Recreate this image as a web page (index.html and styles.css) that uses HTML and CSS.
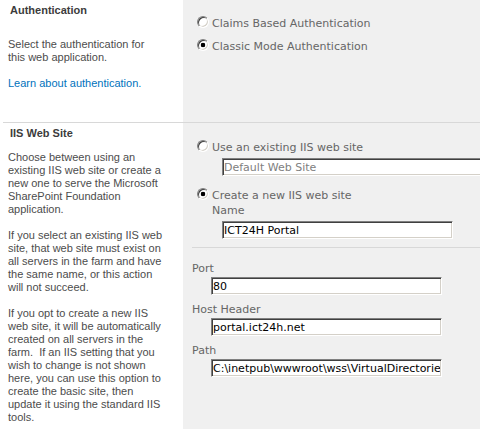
FILE: index.html
```html
<!DOCTYPE html>
<html lang="en">
<head>
  <meta charset="UTF-8">
  <meta name="viewport" content="width=device-width, initial-scale=1.0">
  <title>Create New Web Application</title>
  <link rel="stylesheet" href="styles.css">
</head>
<body>
  <div class="form">
    <div class="section">
      <div class="desc">
        <h3 class="section-title">Authentication</h3>
        <div class="desc-text desc-text-auth">
          <p>Select the authentication for<br>this web application.</p>
          <p><a href="#">Learn about authentication.</a></p>
        </div>
      </div>
      <div class="controls controls-auth">
        <label class="option"><input type="radio" class="radio" name="auth"> Claims Based Authentication</label>
        <label class="option"><input type="radio" class="radio" name="auth" checked> Classic Mode Authentication</label>
      </div>
    </div>

    <div class="section">
      <div class="desc">
        <h3 class="section-title">IIS Web Site</h3>
        <div class="desc-text">
          <p>Choose between using an existing IIS web site or create a new one to serve the Microsoft SharePoint Foundation application.</p>
          <p>If you select an existing IIS web site, that web site must exist on all servers in the farm and have the same name, or this action will not succeed.</p>
          <p>If you opt to create a new IIS web site, it will be automatically created on all servers in the farm.&nbsp; If an IIS setting that you wish to change is not shown here, you can use this option to create the basic site, then update it using the standard IIS tools.</p>
        </div>
      </div>
      <div class="controls controls-iis">
        <label class="option"><input type="radio" class="radio" name="site"> Use an existing IIS web site</label>
        <div class="sub">
          <input type="text" class="text-input text-input-wide" value="Default Web Site" disabled>
        </div>
        <label class="option option-create"><input type="radio" class="radio" name="site" checked> Create a new IIS web site</label>
        <div class="sub-label">Name</div>
        <div class="sub">
          <input type="text" class="text-input" value="ICT24H Portal">
        </div>
        <div class="divider"></div>
        <div class="field">
          <div class="field-label">Port</div>
          <input type="text" class="text-input" value="80">
        </div>
        <div class="field">
          <div class="field-label">Host Header</div>
          <input type="text" class="text-input" value="portal.ict24h.net">
        </div>
        <div class="field">
          <div class="field-label">Path</div>
          <input type="text" class="text-input" value="C:\inetpub\wwwroot\wss\VirtualDirectories\portal.ict24h.net80">
        </div>
      </div>
    </div>
  </div>
</body>
</html>
```

FILE: styles.css
```css
body {
  margin: 0;
  background: #fff;
  overflow: hidden;
}
.form {
  padding-left: 3px;
}
.section {
  display: flex;
}
.section + .section {
  border-top: 1px solid #d8d8d8;
}
.desc {
  width: 180px;
  flex-shrink: 0;
  box-sizing: border-box;
  padding: 4px 17px 32px 5px;
  font-family: "Liberation Sans", Arial, sans-serif;
  font-size: 11px;
  line-height: 13px;
  color: #4c4c4c;
}
.section-title {
  margin: 0 0 0 2px;
  font-size: 11px;
  line-height: 13px;
  font-weight: bold;
  color: #3c3c3c;
}
.desc-text {
  margin-top: 11px;
}
.desc-text-auth {
  margin-top: 21px;
}
.desc-text p {
  margin: 0 0 13px;
}
.desc-text p:last-child {
  margin-bottom: 0;
}
.desc-text a {
  color: #0072bc;
  text-decoration: none;
}
.controls {
  flex: 1;
  overflow: hidden;
  background: #f0f0f0;
  padding-left: 9px;
  font-family: "DejaVu Sans", Verdana, sans-serif;
  font-size: 11px;
  line-height: 15px;
  color: #666;
}
.controls-auth {
  padding-top: 16px;
}
.controls-auth .option + .option {
  margin-top: 8px;
}
.controls-iis {
  padding-top: 17px;
}
.option {
  display: flex;
  align-items: flex-start;
  margin-left: 5px;
  white-space: nowrap;
}
.radio {
  appearance: none;
  -webkit-appearance: none;
  width: 12px;
  height: 12px;
  margin: 0 3px 0 0;
  box-sizing: border-box;
  border-radius: 50%;
  border: 1px solid;
  border-color: #808080 #fff #fff #808080;
  box-shadow: inset 1px 1px 0 #404040, inset -1px -1px 0 #d4d0c8;
  background: #fff;
}
.radio:checked {
  background: radial-gradient(circle, #000 0, #000 2px, #fff 2.6px);
}
.sub {
  margin-left: 30px;
}
.sub .text-input-wide {
  margin-top: 5px;
  width: 270px;
}
.option-create {
  margin-top: 12px;
}
.sub-label {
  margin-left: 20px;
}
.sub .text-input {
  margin-top: 3px;
}
.divider {
  height: 1px;
  margin-top: 8px;
  background: #d8d8d8;
}
.field {
  margin-top: 7px;
}
.divider + .field {
  margin-top: 13px;
}
.field-label {
  line-height: 15px;
}
.field .text-input {
  margin: 1px 0 0 19px;
}
.text-input {
  display: block;
  width: 231px;
  height: 18px;
  box-sizing: border-box;
  padding: 0 1px;
  border: 1px solid;
  border-color: #808080 #fff #fff #808080;
  box-shadow: inset 1px 1px 0 #404040, inset -1px -1px 0 #d4d0c8;
  background: #fff;
  font-family: "DejaVu Sans", Verdana, sans-serif;
  font-size: 11px;
  color: #000;
  outline: none;
}
.text-input:disabled {
  color: #808080;
}
```
